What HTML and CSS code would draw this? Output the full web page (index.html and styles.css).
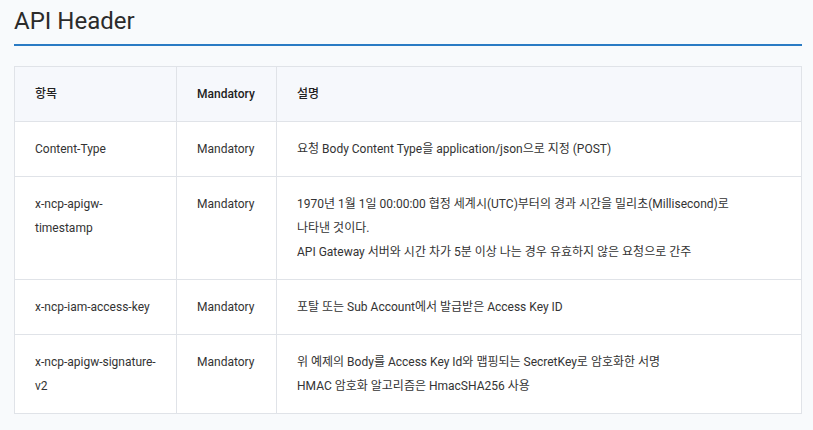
FILE: index.html
```html
<!DOCTYPE html>
<html lang="ko">
<head>
<meta charset="utf-8">
<link rel="stylesheet" href="styles.css">
</head>
<body>
<div class="page">
  <h2 class="title">API Header</h2>
  <table class="api-table">
    <colgroup>
      <col class="c1">
      <col class="c2">
      <col class="c3">
    </colgroup>
    <thead>
      <tr><th>항목</th><th>Mandatory</th><th>설명</th></tr>
    </thead>
    <tbody>
      <tr>
        <td>Content-Type</td>
        <td>Mandatory</td>
        <td>요청 Body Content Type을 application/json으로 지정 (POST)</td>
      </tr>
      <tr>
        <td>x-ncp-apigw-<br>timestamp</td>
        <td>Mandatory</td>
        <td>1970년 1월 1일 00:00:00 협정 세계시(UTC)부터의 경과 시간을 밀리초(Millisecond)로<br>나타낸 것이다.<br>API Gateway 서버와 시간 차가 5분 이상 나는 경우 유효하지 않은 요청으로 간주</td>
      </tr>
      <tr>
        <td>x-ncp-iam-access-key</td>
        <td>Mandatory</td>
        <td>포탈 또는 Sub Account에서 발급받은 Access Key ID</td>
      </tr>
      <tr>
        <td>x-ncp-apigw-signature-<br>v2</td>
        <td>Mandatory</td>
        <td>위 예제의 Body를 Access Key Id와 맵핑되는 SecretKey로 암호화한 서명<br>HMAC 암호화 알고리즘은 HmacSHA256 사용</td>
      </tr>
    </tbody>
  </table>
</div>
</body>
</html>
```

FILE: styles.css
```css
html, body {
  margin: 0;
  padding: 0;
  background: #f8fafc;
}
body {
  font-family: Roboto, "Noto Sans CJK KR", sans-serif;
  color: #333;
}
.page {
  width: 788px;
  margin-left: 14px;
}
.title {
  margin: 0;
  padding-top: 6px;
  height: 38px;
  font-size: 24px;
  font-weight: 400;
  line-height: 30px;
  color: #2b2b2b;
  border-bottom: 2px solid #2a7bc4;
}
.api-table {
  margin-top: 20px;
  width: 788px;
  border-collapse: collapse;
  table-layout: fixed;
  font-size: 12px;
  line-height: 24px;
}
.c1 { width: 162px; }
.c2 { width: 100px; }
.api-table th,
.api-table td {
  border: 1px solid #e0e3e8;
  padding: 15px 20px;
  text-align: left;
  vertical-align: top;
}
.api-table th {
  background: #f6f8fc;
  font-weight: 500;
  color: #222;
}
.api-table td {
  background: #fff;
  font-weight: 400;
}
```
